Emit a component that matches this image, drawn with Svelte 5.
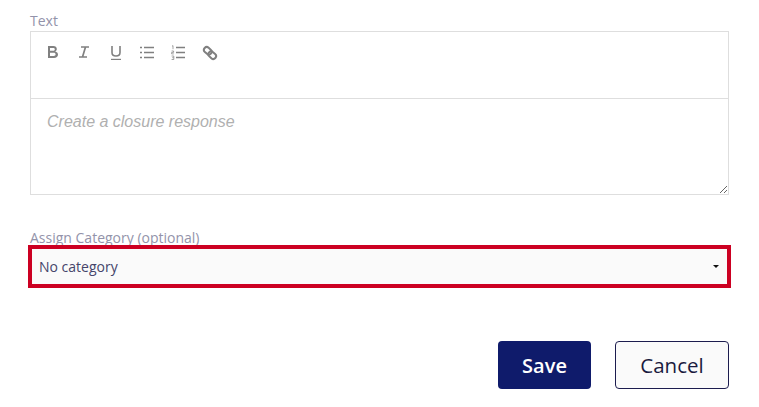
<script>
	let response = $state("");
	let category = $state("none");
</script>

<div class="form">
	<label class="field-label" for="response">Text</label>
	<div class="editor">
		<div class="toolbar">
			<button type="button" class="tool" aria-label="Bold">
				<svg viewBox="0 0 16 16" width="16" height="16"><path d="M3 1h5.300c2.200 0 3.500 1.200 3.500 3 0 1.200-.6 2-1.600 2.400 1.700.4 2.800 1.400 2.800 3.100 0 2.200-1.600 3.500-4 3.500H3z M5 3v2.800h3c1.100 0 1.800-.5 1.800-1.400S9.100 3 8 3z M5 7.700V11h3.700c1.200 0 1.900-.6 1.900-1.650s-.7-1.650-1.900-1.650z" fill="#808080" fill-rule="evenodd" /></svg>
			</button>
			<button type="button" class="tool" aria-label="Italic">
				<svg viewBox="0 0 16 16" width="16" height="16"><path d="M5 2h8M3 12h8M9.500 2L6.500 12" stroke="#808080" stroke-width="1.700" fill="none" /></svg>
			</button>
			<button type="button" class="tool" aria-label="Underline">
				<svg viewBox="0 0 16 16" width="16" height="16"><path d="M4 1v6.500c0 2.400 1.500 3.500 4 3.500s4-1.100 4-3.500V1" stroke="#808080" stroke-width="1.600" fill="none" /><path d="M3 14.400h10" stroke="#808080" stroke-width="1.200" /></svg>
			</button>
			<button type="button" class="tool" aria-label="Bulleted list">
				<svg viewBox="0 0 16 16" width="16" height="16"><path d="M5 2.500h10M5 7.500h10M5 12.500h10" stroke="#808080" stroke-width="1.500" fill="none" /><path d="M1 2.500h2M1 7.500h2M1 12.500h2" stroke="#808080" stroke-width="1.500" fill="none" /></svg>
			</button>
			<button type="button" class="tool" aria-label="Numbered list">
				<svg viewBox="0 0 16 16" width="16" height="16"><path d="M5 2.500h9M5 7.500h9M5 12.500h9" stroke="#808080" stroke-width="1.500" fill="none" /><path d="M1 1.200l1-.6v3.600M.6 6h2v1.400h-2v1.500h2.200M.6 11h2.200v3.500H.6M1.200 12.700h1.500" stroke="#808080" stroke-width=".7" fill="none" /></svg>
			</button>
			<button type="button" class="tool" aria-label="Link">
				<svg viewBox="0 0 16 16" width="16" height="16"><g fill="none" stroke="#808080" stroke-width="2"><rect x="1.600" y="3" width="8.400" height="5.600" rx="2.800" transform="rotate(42 5.800 5.800)" /><rect x="6" y="7.400" width="8.400" height="5.600" rx="2.800" transform="rotate(42 10.200 10.200)" /></g></svg>
			</button>
		</div>
		<textarea id="response" class="response" placeholder="Create a closure response" bind:value={response}></textarea>
	</div>

	<label class="field-label category-label" for="category">Assign Category (optional)</label>
	<div class="category-wrap">
		<select id="category" class="category" bind:value={category}>
			<option value="none">No category</option>
		</select>
	</div>

	<div class="actions">
		<button type="button" class="btn save">Save</button>
		<button type="button" class="btn cancel">Cancel</button>
	</div>
</div>

<style>
	:global(body) {
		background: #fff;
		font-family: "Open Sans", sans-serif;
	}

	.form {
		display: flex;
		flex-direction: column;
		padding: 11px 30px 0;
	}

	.field-label {
		font-size: 14px;
		line-height: 20px;
		color: #9393aa;
	}

	.editor {
		display: flex;
		flex-direction: column;
		height: 164px;
		box-sizing: border-box;
		border: 1px solid #dedede;
	}

	.toolbar {
		display: flex;
		align-items: flex-start;
		gap: 15.4px;
		height: 67px;
		box-sizing: border-box;
		padding: 13px 15px 0 14px;
		border-bottom: 1px solid #dedede;
	}

	.tool {
		display: flex;
		padding: 0;
		border: none;
		background: none;
		cursor: pointer;
	}

	.response {
		flex: 1;
		display: block;
		padding: 12px 16px;
		border: none;
		outline: none;
		font-family: "Liberation Sans", Arial, sans-serif;
		font-size: 16px;
		line-height: 22px;
		resize: vertical;
	}

	.response::placeholder {
		font-style: italic;
		color: #b0b0b0;
		opacity: 1;
	}

	.category-label {
		margin-top: 35px;
		line-height: 15px;
	}

	.category-wrap {
		position: relative;
		margin: 0 -2px;
		height: 43px;
	}

	/* small native looking caret */
	.category-wrap::after {
		content: "";
		position: absolute;
		top: 20px;
		right: 12px;
		width: 0;
		height: 0;
		border-left: 3px solid transparent;
		border-right: 3px solid transparent;
		border-top: 3px solid #111;
		pointer-events: none;
	}

	.category {
		appearance: none;
		box-sizing: border-box;
		display: block;
		width: 100%;
		height: 43px;
		padding: 0 7px;
		border: 4px solid #cc0022;
		border-radius: 0;
		background-color: #fafafa;
		font-family: "Open Sans", sans-serif;
		font-size: 14px;
		color: #45456a;
		outline: none;
	}

	.actions {
		display: flex;
		justify-content: flex-end;
		gap: 24px;
		margin-top: 53px;
	}

	.btn {
		height: 48px;
		box-sizing: border-box;
		border-radius: 4px;
		font-family: "Open Sans", sans-serif;
		font-size: 20px;
		cursor: pointer;
	}

	.save {
		width: 93px;
		border: none;
		background: #0f1b6b;
		color: #fff;
		font-weight: 600;
	}

	.cancel {
		width: 114px;
		border: 1px solid #1c1c4e;
		background: #fafafa;
		color: #1a1a40;
		font-size: 20.5px;
		font-weight: 500;
	}
</style>
